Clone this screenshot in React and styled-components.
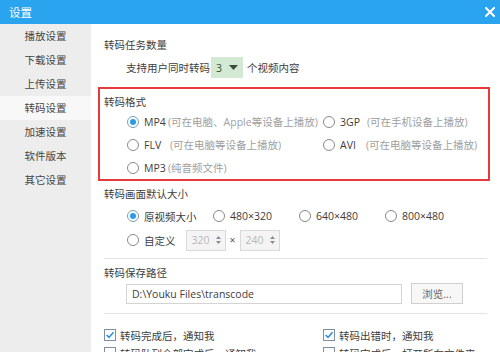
import React from "react";
import styled, { createGlobalStyle } from "styled-components";

const GlobalStyle = createGlobalStyle`
  html, body {
    margin: 0;
    padding: 0;
    overflow: hidden;
    background: #ffffff;
  }
  body {
    font-family: "Open Sans", "Noto Sans CJK SC", sans-serif;
    font-size: 10.5px;
    color: #3d3d3d;
  }
`;

const Window = styled.div`
  width: 500px;
  height: 352px;
  display: flex;
  flex-direction: column;
  overflow: hidden;
  background: #ffffff;
`;

const TitleBar = styled.div`
  height: 24px;
  flex-shrink: 0;
  background: #2ba4ef;
  color: #ffffff;
  display: flex;
  align-items: center;
  justify-content: space-between;
  padding: 0 3px 0 9px;
  font-size: 11.5px;
`;

const CloseButton = styled.div`
  width: 14px;
  height: 14px;
  display: flex;
  align-items: center;
  justify-content: center;
`;

const Body = styled.div`
  flex: 1;
  display: flex;
  min-height: 0;
`;

const Sidebar = styled.div`
  width: 91px;
  flex-shrink: 0;
  background: #ededed;
  display: flex;
  flex-direction: column;
`;

const NavItem = styled.div`
  height: 24px;
  line-height: 24px;
  text-align: center;
  color: #444;
  background: ${(p) => (p.$active ? "#f8f8f8" : "transparent")};
`;

const Main = styled.div`
  flex: 1;
  padding: 0 13px;
  display: flex;
  flex-direction: column;
  overflow: hidden;
`;

const SectionTitle = styled.div`
  line-height: 16px;
  height: 16px;
  margin-top: ${(p) => p.$top || 0}px;
`;

const TaskRow = styled.div`
  margin-top: 4px;
  height: 22px;
  padding-left: 22px;
  display: flex;
  align-items: center;
`;

const Dropdown = styled.div`
  width: 32px;
  height: 21px;
  margin: 0 4px 0 1px;
  background: #d3e9d3;
  display: flex;
  align-items: center;
  padding-left: 5px;
  box-sizing: border-box;
  gap: 7px;
  color: #2f4f2f;
`;

const FormatBox = styled.div`
  margin: 9px -3px 0 -6px;
  border: 2px solid #e6393b;
  padding: 5px 0 0 4px;
  height: 94px;
  box-sizing: border-box;
`;

const FormatGrid = styled.div`
  padding-left: 23px;
  display: grid;
  grid-template-columns: 196px 1fr;
  grid-auto-rows: 23px;
`;

const Option = styled.div`
  display: flex;
  align-items: center;
  white-space: nowrap;
`;

const RadioCircle = styled.span`
  width: 12px;
  height: 12px;
  box-sizing: border-box;
  border-radius: 50%;
  border: 1px solid ${(p) => (p.$checked ? "#7d9ab5" : "#8a8a8a")};
  background: #ffffff;
  display: inline-flex;
  align-items: center;
  justify-content: center;
  margin-right: 5px;
  flex-shrink: 0;

  &::after {
    content: "";
    width: 6px;
    height: 6px;
    border-radius: 50%;
    background: ${(p) => (p.$checked ? "#2b9be8" : "transparent")};
  }
`;

const FormatName = styled.span`
  min-width: ${(p) => p.$w || 24}px;
`;

const Hint = styled.span`
  color: #a0a0a0;
`;

const SizeGrid = styled.div`
  margin-top: 2px;
  padding-left: 23px;
  display: grid;
  grid-template-columns: repeat(4, 86px);
  grid-auto-rows: 24px;
`;

const CustomRow = styled(Option)`
  grid-column: 1 / -1;
`;

const SpinBox = styled.div`
  width: 40px;
  height: 21px;
  box-sizing: border-box;
  border: 1px solid #dadada;
  background: #f4f4f4;
  color: #b8b8b8;
  display: flex;
  align-items: center;
  justify-content: space-between;
  padding: 0 3px 0 5px;
  margin-left: ${(p) => p.$left || 0}px;
`;

const Arrows = styled.div`
  display: flex;
  flex-direction: column;
  gap: 2px;
  padding-right: 1px;
`;

const Times = styled.span`
  margin: 0 4px 0 4px;
  color: #555;
`;

const Divider = styled.div`
  height: 1px;
  background: #e4e4e4;
  margin-top: ${(p) => p.$top || 0}px;
  flex-shrink: 0;
`;

const PathRow = styled.div`
  margin-top: 2px;
  height: 21px;
  padding-left: 22px;
  display: flex;
  align-items: center;
`;

const PathInput = styled.div`
  width: 276px;
  height: 20px;
  box-sizing: border-box;
  border: 1px solid #d4d4d4;
  background: #ffffff;
  padding-left: 5px;
  display: flex;
  align-items: center;
`;

const BrowseButton = styled.div`
  width: 52px;
  height: 21px;
  margin-left: 9px;
  box-sizing: border-box;
  border: 1px solid #d0d0d0;
  background: #f7f7f7;
  color: #666;
  display: flex;
  align-items: center;
  justify-content: center;
`;

const CheckGrid = styled.div`
  margin-top: 12px;
  display: grid;
  grid-template-columns: 219px 1fr;
  grid-auto-rows: 18px;
`;

const CheckItem = styled.div`
  display: flex;
  align-items: center;
  gap: 4px;
  white-space: nowrap;
`;

function CloseIcon() {
  return (
    <svg width="10" height="10" viewBox="0 0 10 10">
      <path d="M1 1 L9 9 M9 1 L1 9" stroke="#ffffff" strokeWidth="2" strokeLinecap="square" />
    </svg>
  );
}

function Caret() {
  return (
    <svg width="9" height="5" viewBox="0 0 9 5">
      <path d="M0 0 H9 L4.5 5 Z" fill="#3c4a3c" />
    </svg>
  );
}

function SpinArrows() {
  return (
    <Arrows>
      <svg width="5" height="3" viewBox="0 0 5 3"><path d="M0 3 L2.5 0 L5 3 Z" fill="#8c8c8c" /></svg>
      <svg width="5" height="3" viewBox="0 0 5 3"><path d="M0 0 L5 0 L2.5 3 Z" fill="#8c8c8c" /></svg>
    </Arrows>
  );
}

function CheckBox({ checked }) {
  return (
    <svg width="12" height="12" viewBox="0 0 12 12">
      <rect x="0.5" y="0.5" width="11" height="11" fill="#fff" stroke="#7f8fa3" />
      {checked && <path d="M2.6 6 L5 8.4 L9.5 3.2" fill="none" stroke="#2c8fde" strokeWidth="1.6" />}
    </svg>
  );
}

const navItems = ["播放设置", "下载设置", "上传设置", "转码设置", "加速设置", "软件版本", "其它设置"];

const formats = [
  { name: "MP4", hint: "(可在电脑、Apple等设备上播放)", checked: true },
  { name: "3GP", hint: "(可在手机设备上播放)", w: 27 },
  { name: "FLV", hint: "(可在电脑等设备上播放)", w: 26 },
  { name: "AVI", hint: "(可在电脑等设备上播放)", w: 26 },
  { name: "MP3", hint: "(纯音频文件)" },
];

const sizes = [
  { label: "原视频大小", checked: true },
  { label: "480×320" },
  { label: "640×480" },
  { label: "800×480" },
];

const notices = [
  { label: "转码完成后，通知我", checked: true },
  { label: "转码出错时，通知我", checked: true },
  { label: "转码队列全部完成后，通知我" },
  { label: "转码完成后，打开所在文件夹" },
];

export default function App() {
  return (
    <>
      <GlobalStyle />
      <Window>
        <TitleBar>
          <span>设置</span>
          <CloseButton><CloseIcon /></CloseButton>
        </TitleBar>
        <Body>
          <Sidebar>
            {navItems.map((item) => (
              <NavItem key={item} $active={item === "转码设置"}>{item}</NavItem>
            ))}
          </Sidebar>
          <Main>
            <SectionTitle $top={13}>转码任务数量</SectionTitle>
            <TaskRow>
              支持用户同时转码
              <Dropdown>3 <Caret /></Dropdown>
              个视频内容
            </TaskRow>

            <FormatBox>
              <SectionTitle>转码格式</SectionTitle>
              <FormatGrid>
                {formats.map((f) => (
                  <Option key={f.name}>
                    <RadioCircle $checked={f.checked} />
                    <FormatName $w={f.w}>{f.name}</FormatName>
                    <Hint>{f.hint}</Hint>
                  </Option>
                ))}
              </FormatGrid>
            </FormatBox>

            <SectionTitle $top={5}>转码画面默认大小</SectionTitle>
            <SizeGrid>
              {sizes.map((s) => (
                <Option key={s.label}>
                  <RadioCircle $checked={s.checked} />
                  {s.label}
                </Option>
              ))}
              <CustomRow>
                <RadioCircle />
                自定义
                <SpinBox $left={10}>320<SpinArrows /></SpinBox>
                <Times>×</Times>
                <SpinBox>240<SpinArrows /></SpinBox>
              </CustomRow>
            </SizeGrid>

            <Divider $top={6} />
            <SectionTitle $top={6}>转码保存路径</SectionTitle>
            <PathRow>
              <PathInput>D:\Youku Files\transcode</PathInput>
              <BrowseButton>浏览...</BrowseButton>
            </PathRow>
            <Divider $top={9} />

            <CheckGrid>
              {notices.map((n) => (
                <CheckItem key={n.label}>
                  <CheckBox checked={n.checked} />
                  {n.label}
                </CheckItem>
              ))}
            </CheckGrid>
          </Main>
        </Body>
      </Window>
    </>
  );
}
